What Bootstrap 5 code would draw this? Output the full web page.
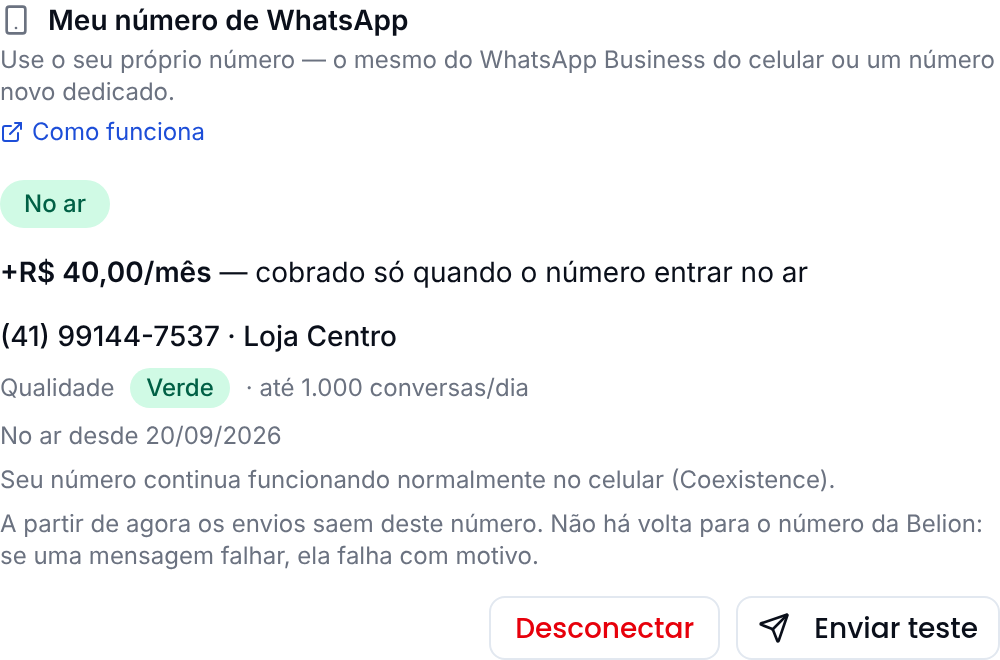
<!DOCTYPE html>
<html lang="pt"><head><meta charset="utf-8">
<link rel="stylesheet" href="https://cdn.jsdelivr.net/npm/bootstrap@5.3.0/dist/css/bootstrap.min.css">
<style>
html,body{margin:0;background:#fff;height:660px;overflow:hidden}
body{font-family:Inter,sans-serif;color:#0a0f1a;text-rendering:geometricPrecision}
.wa-page{will-change:transform}
.wa-head{font-size:28px;line-height:40px;font-weight:600;height:40px}
.wa-sub{color:#6b7280;font-size:24px;line-height:32px}
.wa-first{padding-top:4px}
.wa-link{color:#1d4ed8;font-size:24px;line-height:32px;text-decoration:none;margin-top:8px}
.wa-pill{background:#d0fae5;color:#006045;border-radius:999px;font-size:24px;line-height:32px;padding:8px 24px;font-weight:500}
.wa-pill-sm{padding:4px 16px}
.wa-q{margin-right:-.3px}
.wa-price{font-size:28px;line-height:40px;margin-top:24px}
.wa-num{font-size:28px;line-height:40px;font-weight:500;margin-top:24px}
.wa-row{margin-top:12px;height:40px}
.wa-gap{margin-top:12px}
.wa-btn{border:2px solid #e2e8f0;border-radius:16px;background:#fff;font-family:Poppins,Inter,sans-serif;font-size:28px;font-weight:500;height:64px;padding:2px 24px 0;color:#0a0f1a}
.wa-btn-icon{padding:2px 20px 0}
.wa-btn-icon svg{margin-top:-2px}
.wa-red{color:#e7000b}
</style></head><body>
<div class="d-flex flex-column wa-page">
<div class="d-flex align-items-center gap-3 wa-head"><svg width="32" height="32" viewBox="0 0 24 24" fill="none" stroke="#6b7280" stroke-width="2" stroke-linecap="round" stroke-linejoin="round"><rect x="5" y="2" width="14" height="20" rx="2"/><path d="M12 18h.01"/></svg><span>Meu número de WhatsApp</span></div>
<div class="wa-sub wa-first">Use o seu próprio número — o mesmo do WhatsApp Business do celular ou um número novo dedicado.</div>
<a class="wa-link d-flex align-items-center gap-2" href="#"><svg width="24" height="24" viewBox="0 0 24 24" fill="none" stroke="#1d4ed8" stroke-width="2" stroke-linecap="round" stroke-linejoin="round"><path d="M18 13v6a2 2 0 0 1-2 2H5a2 2 0 0 1-2-2V8a2 2 0 0 1 2-2h6"/><path d="M15 3h6v6"/><path d="M10 14 21 3"/></svg><span>Como funciona</span></a>
<div class="d-flex mt-4 pt-2"><span class="wa-pill">No ar</span></div>
<div class="wa-price"><strong class="fw-semibold">+R$ 40,00/mês</strong> — cobrado só quando o número entrar no ar</div>
<div class="wa-num">(41) 99144-7537 · Loja Centro</div>
<div class="wa-row d-flex align-items-center wa-sub"><span class="wa-q">Qualidade</span><span class="wa-pill wa-pill-sm ms-3 me-3">Verde</span><span>· até 1.000 conversas/dia</span></div>
<div class="wa-sub wa-gap">No ar desde 20/09/2026</div>
<div class="wa-sub wa-gap">Seu número continua funcionando normalmente no celular (Coexistence).</div>
<div class="wa-sub wa-gap">A partir de agora os envios saem deste número. Não há volta para o número da Belion: se uma mensagem falhar, ela falha com motivo.</div>
<div class="d-flex justify-content-end gap-3 mt-4"><button class="wa-btn wa-red">Desconectar</button><button class="wa-btn wa-btn-icon d-flex align-items-center gap-4"><svg width="32" height="32" viewBox="0 0 24 24" fill="none" stroke="#0a0f1a" stroke-width="2" stroke-linecap="round" stroke-linejoin="round"><path d="M14.536 21.686a.5.5 0 0 0 .937-.024l6.5-19a.496.496 0 0 0-.635-.635l-19 6.5a.5.5 0 0 0-.024.937l7.93 3.18a2 2 0 0 1 1.112 1.11z"/><path d="m21.854 2.147-10.94 10.939"/></svg><span>Enviar teste</span></button></div>
</div>
</body></html>
